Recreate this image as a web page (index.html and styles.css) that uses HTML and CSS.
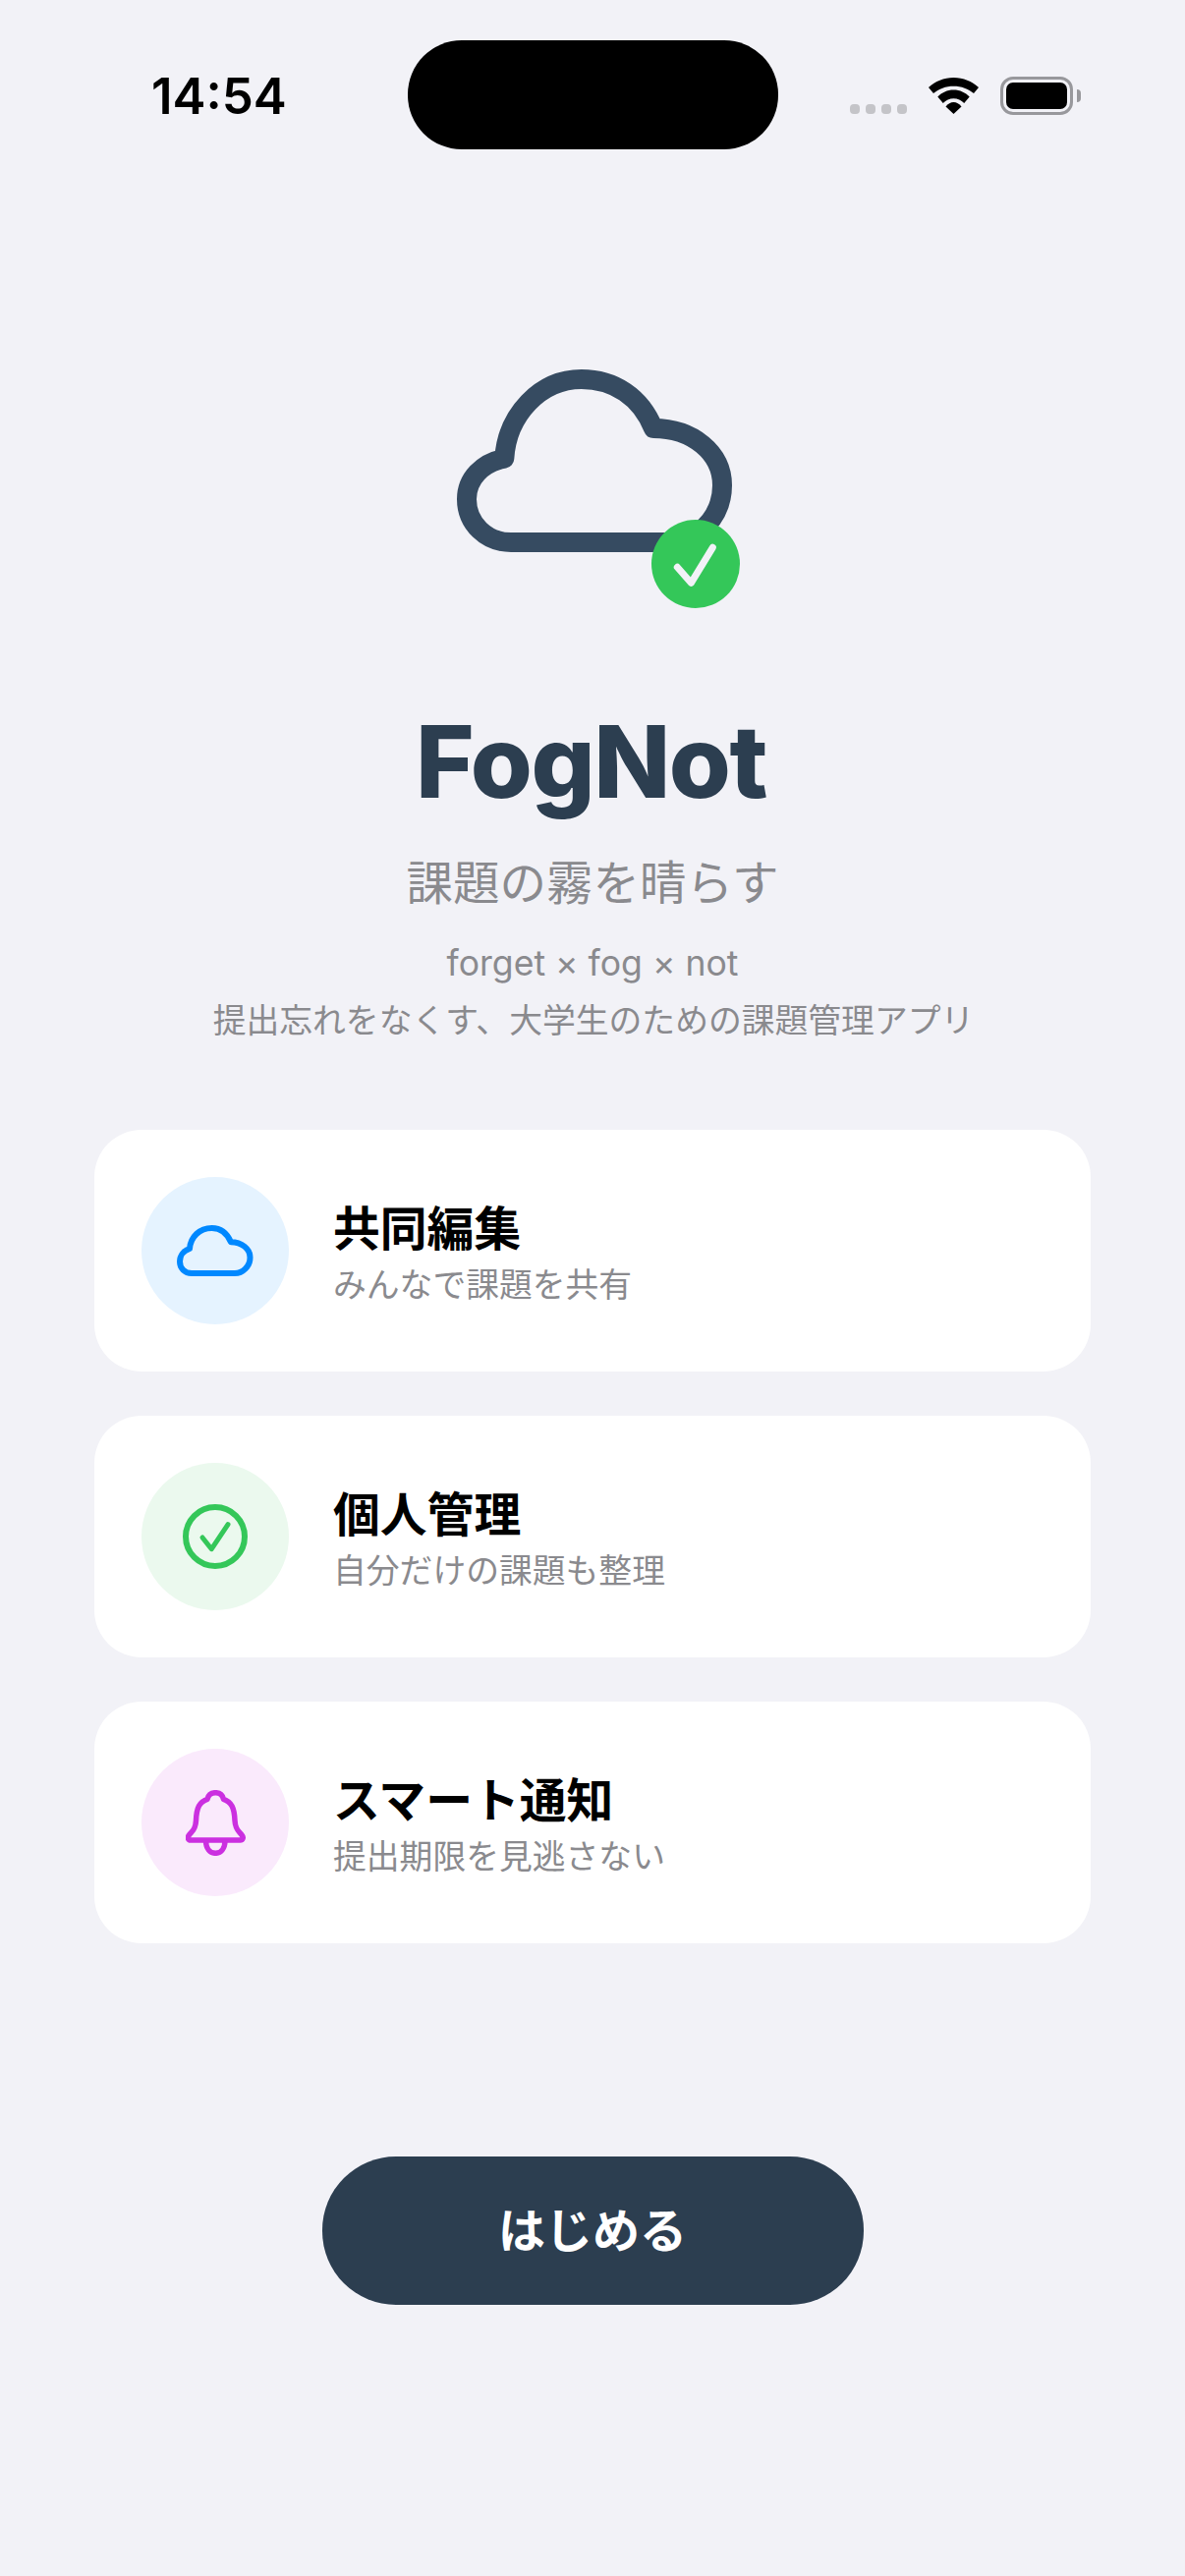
FILE: index.html
```html
<!DOCTYPE html>
<html lang="ja">
<head>
<meta charset="utf-8">
<title>FogNot</title>
<link rel="stylesheet" href="styles.css">
</head>
<body>
<div class="screen">
  <header class="status">
    <span class="time">14:54</span>
    <div class="island"></div>
    <div class="status-right">
      <div class="dots"><i></i><i></i><i></i><i></i></div>
      <svg class="wifi" width="51" height="37" viewBox="0 0 51 37"><path d="M25.5 0C15.5 0 7 3.700 0 10L5 16C10.500 11.300 17.500 8.700 25.500 8.700C33.500 8.700 40.500 11.300 46 16L51 10C44 3.700 35.500 0 25.500 0Z" fill="#000"/><path d="M25.500 12.500C19 12.500 13.500 15.200 9.300 19.500L14.800 26C17.800 23 21.300 21.200 25.500 21.200C29.700 21.200 33.200 23 36.200 26L41.700 19.500C37.500 15.200 32 12.500 25.500 12.500Z" fill="#000"/><path d="M25.500 25C22.500 25 19.800 26.500 17.500 29.500L25.500 37L33.500 29.500C31.200 26.500 28.500 25 25.500 25Z" fill="#000"/></svg>
      <div class="battery"><div class="battery-fill"></div></div>
      <div class="battery-cap"></div>
    </div>
  </header>
  <main class="hero">
    <div class="logo">
      <svg class="logo-cloud" width="280" height="186" viewBox="0 0 280 186"><path d="M55 176C30 176 10 157 10 132C10 111 26 95 48.300 90.700C51 46 85 10 126.700 10C160 10 187 28 200 60C240 60 270 85 270 118C270 150 245 176 215 176Z" fill="none" stroke="#364b61" stroke-width="20" stroke-linejoin="round"/></svg>
      <div class="logo-badge">
        <svg width="90" height="90" viewBox="0 0 90 90"><path d="M26.300 48.300L40.300 64.300L62.300 28.300" fill="none" stroke="#f2f2f7" stroke-width="7" stroke-linecap="round" stroke-linejoin="round"/></svg>
      </div>
    </div>
    <h1 class="title">FogNot</h1>
    <p class="tagline">課題の霧を晴らす</p>
    <p class="origin">forget × fog × not</p>
    <p class="desc">提出忘れをなくす、大学生のための課題管理アプリ</p>
  </main>
  <section class="cards">
    <article class="card">
      <div class="icon icon-blue">
        <svg width="78" height="52" viewBox="0 0 78 52"><path d="M15 49C8 49 3 44 3 37C3 31 7 26 13 24C14 12 23 3 35.600 3C44 3 51 8 55 17.300C66 17.300 74.500 24 74.500 33C74.500 42 67 49 59 49Z" fill="none" stroke="#0088ff" stroke-width="6" stroke-linejoin="round"/></svg>
      </div>
      <div class="card-text">
        <h2 class="card-title">共同編集</h2>
        <p class="card-sub">みんなで課題を共有</p>
      </div>
    </article>
    <article class="card">
      <div class="icon icon-green">
        <svg width="66" height="66" viewBox="0 0 66 66"><circle cx="33" cy="33" r="30" fill="none" stroke="#34c759" stroke-width="6"/><path d="M20 34L29.300 45.700L46 20.700" fill="none" stroke="#34c759" stroke-width="5" stroke-linecap="round" stroke-linejoin="round"/></svg>
      </div>
      <div class="card-text">
        <h2 class="card-title">個人管理</h2>
        <p class="card-sub">自分だけの課題も整理</p>
      </div>
    </article>
    <article class="card">
      <div class="icon icon-purple">
        <svg width="61" height="67" viewBox="0 0 61 67"><path d="M5 51C2.500 51 1.500 48.500 3 46.500C6 42 10 41 10.500 31C11 18 14 12 22 9.300C23 5 26 2.700 30.300 2.700C34.500 2.700 37.500 5 38.500 9.300C46.500 12 49.500 18 50 31C50.500 41 54.500 42 57.500 46.500C59 48.500 58 51 55.500 51Z" fill="none" stroke="#cb30e0" stroke-width="5.500" stroke-linejoin="round"/><path d="M20.500 51C20.500 60 25 64.300 30.300 64.300C35.500 64.300 40 60 40 51" fill="none" stroke="#cb30e0" stroke-width="5.500"/></svg>
      </div>
      <div class="card-text">
        <h2 class="card-title">スマート通知</h2>
        <p class="card-sub">提出期限を見逃さない</p>
      </div>
    </article>
  </section>
  <div class="actions">
    <button class="start" type="button">はじめる</button>
  </div>
</div>
</body>
</html>
```

FILE: styles.css
```css
* { box-sizing: border-box; margin: 0; padding: 0; }
html, body { width: 1206px; height: 2622px; overflow: hidden; }
body { background: #f2f2f7; font-family: Inter, "Noto Sans CJK JP", sans-serif; color: #000; }
.screen { width: 1206px; height: 2622px; display: flex; flex-direction: column; align-items: center; }

.status { width: 100%; height: 152px; padding-top: 41px; display: flex; align-items: flex-start; position: relative; justify-content: center; }
.time { position: absolute; left: 154px; top: 70px; font-size: 51px; line-height: 56px; font-weight: 600; letter-spacing: 0; }
.island { width: 377px; height: 111px; background: #000; border-radius: 55px; }
.status-right { position: absolute; left: 865px; top: 78px; display: flex; align-items: flex-end; height: 39px; }
.dots { display: flex; gap: 6px; margin-bottom: 1px; }
.dots i { width: 10px; height: 10px; border-radius: 4px; background: #c4c4c8; display: block; }
.wifi { margin-left: 22px; margin-bottom: 1px; }
.battery { width: 74px; height: 39px; margin-left: 22px; border: 3px solid #98989c; border-radius: 13px; padding: 3px; }
.battery-fill { width: 100%; height: 100%; background: #000; border-radius: 7px; }
.battery-cap { width: 4px; height: 13px; background: #98989c; border-radius: 0 6px 6px 0; margin: 0 0 13px 4px; }

.hero { display: flex; flex-direction: column; align-items: center; width: 100%; }
.logo { width: 280px; height: 186px; margin-top: 224px; margin-left: 4px; position: relative; }
.logo-cloud { display: block; }
.logo-badge { position: absolute; left: 198px; top: 153px; width: 90px; height: 90px; border-radius: 50%; background: #34c759; }
.logo-badge svg { display: block; }
.title { margin-top: 151px; margin-right: 3px; font-size: 102px; line-height: 124px; font-weight: 800; color: #2c3e50; letter-spacing: -1.500px; }
.tagline { margin-top: 27px; font-size: 47.500px; line-height: 70px; font-weight: 400; color: #8a8a8e; }
.origin { margin-top: 24px; font-size: 35.600px; line-height: 46px; color: #8a8a8e; }
.desc { margin-top: 11px; margin-left: 2px; font-size: 33.800px; line-height: 48px; color: #8a8a8e; }

.cards { width: 1014px; margin-top: 87px; display: flex; flex-direction: column; gap: 45px; }
.card { height: 246px; background: #fff; border-radius: 48px; padding: 48px; display: flex; align-items: center; gap: 45px; }
.icon { width: 150px; height: 150px; border-radius: 50%; display: flex; align-items: center; justify-content: center; flex: none; }
.icon svg { display: block; }
.icon-blue { background: #e5f3ff; }
.icon-green { background: #ebf9ee; }
.icon-purple { background: #faeafc; }
.card-text { padding-top: 9px; }
.card-title { font-size: 47.800px; line-height: 54px; font-weight: 700; color: #000; }
.card-sub { margin-top: 7px; font-size: 33.800px; line-height: 46px; font-weight: 400; color: #8a8a8e; }

.actions { margin-top: 217px; }
.start { display: block; width: 551px; height: 151px; padding-bottom: 7px; background: #2c3e50; border: 0; border-radius: 75px; color: #fff; font-family: inherit; font-size: 48px; font-weight: 600; }
```
